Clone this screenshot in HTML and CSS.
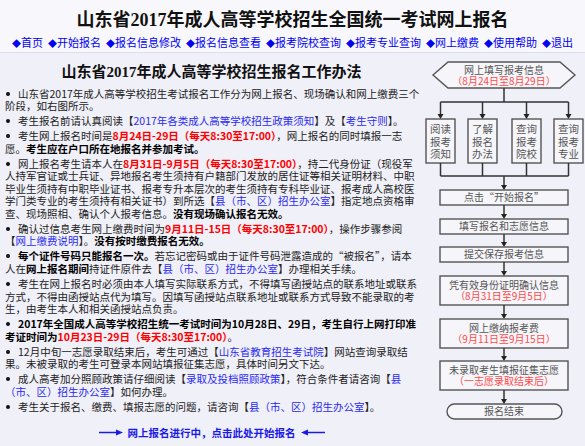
FILE: index.html
```html
<!DOCTYPE html>
<html lang="zh-CN">
<head>
<meta charset="utf-8">
<title>山东省2017年成人高等学校招生全国统一考试网上报名</title>
<link rel="stylesheet" href="styles.css">
</head>
<body>
<header class="top">
  <h1 class="site-title">山东省2017年成人高等学校招生全国统一考试网上报名</h1>
  <nav class="nav">
    <a href="#"><span class="dia">◆</span>首页</a>
    <a href="#"><span class="dia">◆</span>开始报名</a>
    <a href="#"><span class="dia">◆</span>报名信息修改</a>
    <a href="#"><span class="dia">◆</span>报名信息查看</a>
    <a href="#"><span class="dia">◆</span>报考院校查询</a>
    <a href="#"><span class="dia">◆</span>报考专业查询</a>
    <a href="#"><span class="dia">◆</span>网上缴费</a>
    <a href="#"><span class="dia">◆</span>使用帮助</a>
    <a href="#"><span class="dia">◆</span>退出</a>
  </nav>
</header>
<div class="main">
  <section class="notes">
    <h2 class="sec-title">山东省2017年成人高等学校招生报名工作办法</h2>
    <ul class="list">
      <li>山东省2017年成人高等学校招生考试报名工作分为网上报名、现场确认和网上缴费三个阶段，如右图所示。</li>
      <li>考生报名前请认真阅读【<a href="#">2017年各类成人高等学校招生政策须知</a>】及【<a href="#">考生守则</a>】。</li>
      <li>考生网上报名时间是<span class="red">8月24日-29日（每天8:30至17:00）</span>，网上报名的同时填报一志愿。<span class="b">考生应在户口所在地报名并参加考试。</span></li>
      <li>网上报名考生请本人在<span class="red">8月31日-9月5日（每天8:30至17:00）</span>，持二代身份证（现役军人持军官证或士兵证、异地报名考生须持有户籍部门发放的居住证等相关证明材料、中职毕业生须持有中职毕业证书、报考专升本层次的考生须持有专科毕业证、报考成人高校医学门类专业的考生须持有相关证书）到所选【<a href="#">县（市、区）招生办公室</a>】指定地点资格审查、现场照相、确认个人报考信息。<span class="b">没有现场确认报名无效。</span></li>
      <li>确认过信息考生网上缴费时间为<span class="red">9月11日-15日（每天8:30至17:00）</span>，操作步骤参阅【<a href="#">网上缴费说明</a>】。<span class="b">没有按时缴费报名无效。</span></li>
      <li><span class="b">每个证件号码只能报名一次。</span>若忘记密码或由于证件号码泄露造成的“被报名”，请本人在<span class="b">网上报名期间</span>持证件原件去【<a href="#">县（市、区）招生办公室</a>】办理相关手续。</li>
      <li>考生在网上报名时必须由本人填写实际联系方式，不得填写函授站点的联系地址或联系方式，不得由函授站点代为填写。因填写函授站点联系地址或联系方式导致不能录取的考生，由考生本人和相关函授站点负责。</li>
      <li><span class="b">2017年全国成人高等学校招生统一考试时间为10月28日、29日，考生自行上网打印准考证时间为</span><span class="red">10月23日-29日（每天8:30至17:00）</span>。</li>
      <li>12月中旬一志愿录取结束后，考生可通过【<a href="#">山东省教育招生考试院</a>】网站查询录取结果。未被录取的考生可登录本网站填报征集志愿，具体时间另文下达。</li>
      <li>成人高考加分照顾政策请仔细阅读【<a href="#">录取及投档照顾政策</a>】，符合条件者请咨询【<a href="#">县（市、区）招生办公室</a>】如何办理。</li>
      <li>考生关于报名、缴费、填报志愿的问题，请咨询【<a href="#">县（市、区）招生办公室</a>】。</li>
    </ul>
    <a class="start" href="#">
      <svg class="arr" width="24" height="7" viewBox="0 0 24 7"><path d="M0 3.5 H19" class="arr-ln"/><polygon points="17,0.5 24,3.5 17,6.5" class="arr-hd"/></svg>
      <span>网上报名进行中，点击此处开始报名</span>
      <svg class="arr" width="24" height="7" viewBox="0 0 24 7"><path d="M5 3.5 H24" class="arr-ln"/><polygon points="7,0.5 0,3.5 7,6.5" class="arr-hd"/></svg>
    </a>
  </section>
  <aside class="flow">
    <svg class="chart" width="165" height="370" viewBox="0 0 165 370">
      <polygon class="shape" points="28,5 140,5 155,18 140,31 28,31 13,18"/>
      <text class="t" x="84" y="16.5">网上填写报考信息</text>
      <text class="t r" x="84" y="27.5">（8月24日至8月29日）</text>

      <path class="ln" d="M84 31 V45 M20.5 45 H148.5 M20.5 45 V57 M62.5 45 V57 M106.5 45 V57 M148.5 45 V57"/>
      <polygon class="hd" points="17.5,57 23.5,57 20.5,62"/>
      <polygon class="hd" points="59.5,57 65.5,57 62.5,62"/>
      <polygon class="hd" points="103.5,57 109.5,57 106.5,62"/>
      <polygon class="hd" points="145.5,57 151.5,57 148.5,62"/>

      <rect class="shape" x="6" y="62" width="29" height="44"/>
      <rect class="shape" x="48" y="62" width="29" height="44"/>
      <rect class="shape" x="92" y="62" width="29" height="44"/>
      <rect class="shape" x="134" y="62" width="29" height="44"/>
      <text class="t v" x="20.5" y="76">阅读</text>
      <text class="t v" x="20.5" y="88.5">报考</text>
      <text class="t v" x="20.5" y="101">须知</text>
      <text class="t v" x="62.5" y="76">了解</text>
      <text class="t v" x="62.5" y="88.5">报名</text>
      <text class="t v" x="62.5" y="101">办法</text>
      <text class="t v" x="106.5" y="76">查询</text>
      <text class="t v" x="106.5" y="88.5">报考</text>
      <text class="t v" x="106.5" y="101">院校</text>
      <text class="t v" x="148.5" y="76">查询</text>
      <text class="t v" x="148.5" y="88.5">报考</text>
      <text class="t v" x="148.5" y="101">专业</text>

      <path class="ln" d="M20.5 106 V119 M62.5 106 V119 M106.5 106 V119 M148.5 106 V119 M20.5 119 H148.5 M84 119 V128"/>
      <polygon class="hd" points="81,128 87,128 84,133"/>

      <rect class="shape" x="20" y="133" width="128" height="15"/>
      <text class="t" x="84" y="144">点击“开始报名”</text>
      <path class="ln" d="M84 148 V157"/>
      <polygon class="hd" points="81,157 87,157 84,162"/>

      <rect class="shape" x="20" y="162" width="128" height="15"/>
      <text class="t" x="84" y="173">填写报名和志愿信息</text>
      <path class="ln" d="M84 177 V185"/>
      <polygon class="hd" points="81,185 87,185 84,190"/>

      <rect class="shape" x="20" y="190" width="128" height="15"/>
      <text class="t" x="84" y="201">提交保存报考信息</text>
      <path class="ln" d="M84 205 V214"/>
      <polygon class="hd" points="81,214 87,214 84,219"/>

      <rect class="shape" x="20" y="219" width="128" height="29"/>
      <text class="t" x="84" y="231.5">凭有效身份证明确认信息</text>
      <text class="t r" x="84" y="242.5">（8月31日至9月5日）</text>
      <path class="ln" d="M84 248 V257"/>
      <polygon class="hd" points="81,257 87,257 84,262"/>

      <rect class="shape" x="20" y="262" width="128" height="29"/>
      <text class="t" x="84" y="274.5">网上缴纳报考费</text>
      <text class="t r" x="84" y="285.5">（9月11日至9月15日）</text>
      <path class="ln" d="M84 291 V299"/>
      <polygon class="hd" points="81,299 87,299 84,304"/>

      <rect class="shape" x="20" y="304" width="128" height="29"/>
      <text class="t" x="84" y="316.5">未录取考生填报征集志愿</text>
      <text class="t r" x="84" y="327.5">（一志愿录取结束后）</text>
      <path class="ln" d="M84 333 V342"/>
      <polygon class="hd" points="81,342 87,342 84,347"/>

      <rect class="shape" x="27" y="347" width="115" height="15" rx="7.5" ry="7.5"/>
      <text class="t" x="84" y="358">报名结束</text>
    </svg>
  </aside>
</div>
</body>
</html>
```

FILE: styles.css
```css
html, body {
  margin: 0;
  padding: 0;
}

body {
  width: 585px;
  height: 446px;
  overflow: hidden;
  background: #f0f0f8;
  color: #222;
  font-family: "Noto Sans CJK SC", sans-serif;
}

.top {
  background: #f8f8fc;
  border-bottom: 1px solid #dedeec;
  padding: 9px 0 1px;
  text-align: center;
}

.site-title {
  margin: 0;
  font-family: "Liberation Serif", "Noto Sans CJK SC", serif;
  font-weight: bold;
  font-size: 18px;
  line-height: 22px;
  color: #111;
}

.nav {
  display: flex;
  justify-content: center;
  gap: 5px;
  margin-top: 4px;
  font-size: 11px;
  line-height: 14px;
}

.nav a {
  color: #0000f0;
  text-decoration: none;
}

.nav .dia {
  font-size: 9px;
}

.main {
  display: flex;
}

.notes {
  width: 415px;
  padding-left: 5px;
  font-size: 10.5px;
  line-height: 12.5px;
}

.sec-title {
  margin: 10px 0 0;
  padding-right: 2px;
  text-align: center;
  font-family: "Liberation Serif", "Noto Sans CJK SC", serif;
  font-weight: bold;
  font-size: 15px;
  line-height: 18px;
  color: #111;
}

.list {
  list-style: none;
  margin: 6.5px 0 0;
  padding: 0;
}

.list li + li {
  margin-top: 2.6px;
}

.list li::before {
  content: "";
  display: inline-block;
  width: 4px;
  height: 4px;
  border-radius: 50%;
  background: #111;
  margin: 0 8px 0 1px;
  vertical-align: 2px;
}

.list a {
  color: #2a2af0;
  text-decoration: none;
}

.red {
  color: #f00;
  font-weight: bold;
}

.b {
  color: #000;
  font-weight: bold;
}

.start {
  display: flex;
  justify-content: center;
  align-items: center;
  gap: 5px;
  margin-top: 12.5px;
  padding-right: 2px;
  font-size: 10.5px;
  line-height: 14px;
  font-weight: bold;
  color: #1a1ae8;
  text-decoration: none;
}

.arr-ln {
  stroke: #1a1ae8;
  stroke-width: 1.5;
  fill: none;
}

.arr-hd {
  fill: #1a1ae8;
}

.flow {
  width: 165px;
  margin-top: 4px;
}

.chart {
  display: block;
}

.chart .shape {
  fill: #f5f5fa;
  stroke: #555;
  stroke-width: 1.4;
}

.chart .ln {
  fill: none;
  stroke: #333;
  stroke-width: 1.5;
}

.chart .hd {
  fill: #222;
}

.chart .t {
  font-family: "Noto Sans CJK SC", sans-serif;
  font-size: 10px;
  fill: #555;
  text-anchor: middle;
}

.chart .t.v {
  font-size: 10.5px;
}

.chart .t.r {
  fill: #ff4a4a;
}
```
